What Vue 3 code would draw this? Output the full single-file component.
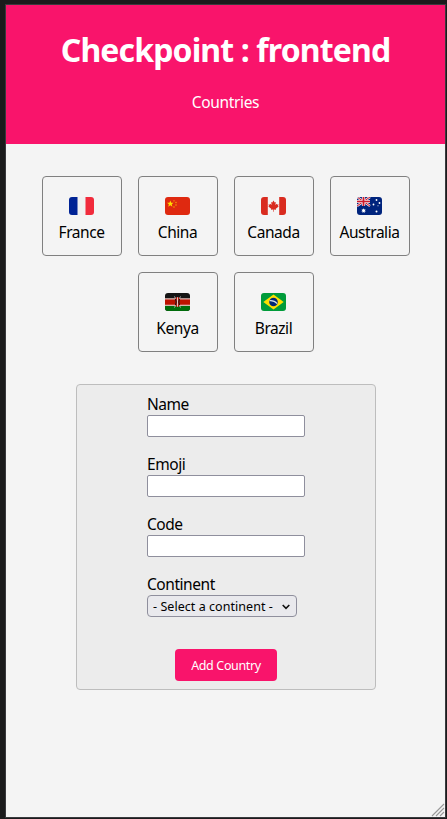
<script setup>
import { ref } from 'vue'

const countries = ['France', 'China', 'Canada', 'Australia', 'Kenya', 'Brazil']
const fields = ['Name', 'Emoji', 'Code']
const continent = ref('')
</script>

<template>
  <div class="frame">
    <div class="page">
      <header class="header">
        <h1>Checkpoint : frontend</h1>
        <p>Countries</p>
      </header>
      <main class="main">
        <div class="cards">
          <article v-for="c in countries" :key="c" class="card">
            <svg class="flag" viewBox="0 0 25 18" width="25" height="18">
              <g v-if="c === 'France'">
                <rect width="25" height="18" fill="#f1f1f1" />
                <rect width="8.5" height="18" fill="#002395" />
                <rect x="16.5" width="8.5" height="18" fill="#f12b3c" />
              </g>
              <g v-else-if="c === 'China'">
                <rect width="25" height="18" fill="#df2910" />
                <path d="M5.3 3.6l.9 2.2h2.4L6.7 7.3l.7 2.4-2.1-1.4-2.1 1.4.7-2.4-1.9-1.5h2.4z" fill="#ffde00" />
                <g fill="#f9b500">
                  <circle cx="9" cy="3.8" r=".65" /><circle cx="11" cy="5.5" r=".65" />
                  <circle cx="11" cy="8" r=".65" /><circle cx="9" cy="10" r=".65" />
                </g>
              </g>
              <g v-else-if="c === 'Canada'">
                <rect width="25" height="18" fill="#f4f4f4" />
                <path d="M0 0h6.8v18H0zM18.2 0H25v18h-6.8z" fill="#d92b1f" />
                <path d="M12.5 3.6l1.2 2 1.1-.5-.4 3 1.4-1.3.3.8 1.5-.2-.6 1.6.7.5-2.9 2.3.3.9-2.3-.3v2.4h-.6v-2.4l-2.3.3.3-.9-2.9-2.3.7-.5-.6-1.6 1.5.2.3-.8 1.4 1.3-.4-3 1.1.5z" fill="#d92b1f" />
              </g>
              <g v-else-if="c === 'Australia'">
                <rect width="25" height="18" fill="#00247d" />
                <path d="M0 0l13 9M13 0L0 9" stroke="#f1dfe6" stroke-width="2.4" />
                <path d="M0 0l13 9M13 0L0 9" stroke="#cf1b2b" stroke-width="1" />
                <path d="M6.5 0v9M0 4.5h13" stroke="#f1dfe6" stroke-width="3.2" />
                <path d="M6.5 0v9M0 4.5h13" stroke="#cf1b2b" stroke-width="1.7" />
                <path d="M6.6 11.2l.6 1.3 1.4-.3-.7 1.2 1.1.9-1.4.3v1.4l-1-1-1 1v-1.4l-1.4-.3 1.1-.9-.7-1.2 1.4.3z" fill="#fff" />
                <g fill="#fff">
                  <circle cx="19.5" cy="3" r=".9" /><circle cx="16.5" cy="7.5" r=".9" />
                  <circle cx="22.5" cy="6" r=".9" /><circle cx="21" cy="8.7" r=".5" />
                  <circle cx="19.5" cy="14.5" r="1" />
                </g>
              </g>
              <g v-else-if="c === 'Kenya'">
                <rect width="25" height="18" fill="#141414" />
                <rect y="5.2" width="25" height="7.8" fill="#d8b5b0" />
                <rect y="6.5" width="25" height="5.2" fill="#bd1200" />
                <rect y="13" width="25" height="5" fill="#006c0b" />
                <path d="M9.5 3.5l6 11M15.5 3.5l-6 11" stroke="#ddd" stroke-width=".8" />
                <ellipse cx="12.5" cy="9" rx="2.5" ry="5" fill="#b41608" />
                <path d="M10.5 6q1.4 3 0 6M14.5 6q-1.4 3 0 6" stroke="#141414" fill="none" />
                <path d="M12.5 4.3v9.4" stroke="#e8dcdc" stroke-width=".9" />
              </g>
              <g v-else>
                <rect width="25" height="18" fill="#009b3a" />
                <path d="M12.5 1.6L22.7 9l-10.2 7.4L2.3 9z" fill="#fedf00" />
                <circle cx="12.5" cy="9" r="4.3" fill="#002776" />
                <path d="M8.6 7.7q4.5-.5 7.6 3" stroke="#d5e3ea" stroke-width="1.1" fill="none" />
              </g>
            </svg>
            <span>{{ c }}</span>
          </article>
        </div>
        <form class="form" @submit.prevent>
          <label v-for="f in fields" :key="f" class="field">
            <span>{{ f }}</span>
            <input type="text" />
          </label>
          <label class="field">
            <span>Continent</span>
            <span class="select">
              <select v-model="continent">
                <option value="">- Select a continent -</option>
              </select>
              <svg class="chevron" viewBox="0 0 8 6" width="8" height="6">
                <path d="M.7 1L4 4.3 7.3 1" fill="none" stroke="#111" stroke-width="1.6" />
              </svg>
            </span>
          </label>
          <button type="submit">Add Country</button>
        </form>
      </main>
      <svg class="grip" viewBox="0 0 14 14" width="14" height="14">
        <path d="M1 13L13 1M5 13l8-8M9 13l4-4" stroke="#999" stroke-width="1.1" />
      </svg>
    </div>
  </div>
</template>

<style>
body {
  margin: 0;
  background: #1b1b1c;
}
</style>

<style scoped>
.frame {
  box-sizing: border-box;
  width: 447px;
  height: 819px;
  padding: 4px 1px 1px 5px;
  background: #1b1b1c;
  overflow: hidden;
}
.page {
  position: relative;
  box-sizing: border-box;
  width: 441px;
  height: 814px;
  border: 1px solid #3a3a3d;
  background: #f4f4f4;
  color: #000;
  font: 15.5px/21px "Noto Sans", "Open Sans", sans-serif;
  letter-spacing: -0.45px;
}
.header {
  box-sizing: border-box;
  height: 139px;
  padding-top: 23px;
  background: #f9146b;
  color: #fff;
  text-align: center;
}
h1 {
  margin: 0;
  font-size: 32px;
  line-height: 43px;
  font-weight: 700;
  letter-spacing: -0.87px;
  white-space: nowrap;
}
p {
  margin: 21px 0 0;
  letter-spacing: -0.35px;
}
.main {
  padding: 32px 0 0 1px;
}
.cards {
  display: flex;
  flex-wrap: wrap;
  justify-content: center;
  gap: 16px;
  width: 368px;
  margin: 0 35px;
}
.card {
  box-sizing: border-box;
  display: flex;
  flex-direction: column;
  align-items: center;
  width: 80px;
  height: 80px;
  padding: 20px 1px 0 0;
  border: 1px solid #808080;
  border-radius: 4px;
}
.flag {
  display: block;
  margin-bottom: 7px;
  border-radius: 3px;
}
.form {
  box-sizing: border-box;
  display: flex;
  flex-direction: column;
  align-items: center;
  width: 300px;
  height: 306px;
  margin: 32px 69px 0;
  padding-top: 9px;
  border: 1px solid #bdbdbd;
  border-radius: 4px;
  background: #ececec;
}
.field {
  display: flex;
  flex-direction: column;
  width: 158px;
  height: 43px;
  margin-bottom: 17px;
}
.field input {
  box-sizing: border-box;
  width: 158px;
  height: 22px;
  border: 1px solid #8f8f9d;
  border-radius: 2px;
  background: #fff;
  outline: none;
}
.select {
  position: relative;
  width: 150px;
  height: 22px;
}
select {
  display: block;
  box-sizing: border-box;
  width: 150px;
  height: 22px;
  padding: 0 0 0 5px;
  appearance: none;
  border: 1px solid #8f8f9d;
  border-radius: 4px;
  background: #e9e9ed;
  color: #000;
  font: 12.5px "Noto Sans", sans-serif;
  letter-spacing: 0.05px;
}
.chevron {
  position: absolute;
  right: 7px;
  top: 9px;
}
button {
  width: 102px;
  height: 32px;
  margin-top: 15px;
  padding: 0;
  border: 0;
  border-radius: 4px;
  background: #f9146b;
  color: #fff;
  font: 12.5px "Noto Sans", sans-serif;
  letter-spacing: -0.35px;
}
.grip {
  position: absolute;
  right: 0;
  bottom: 0;
}
</style>
